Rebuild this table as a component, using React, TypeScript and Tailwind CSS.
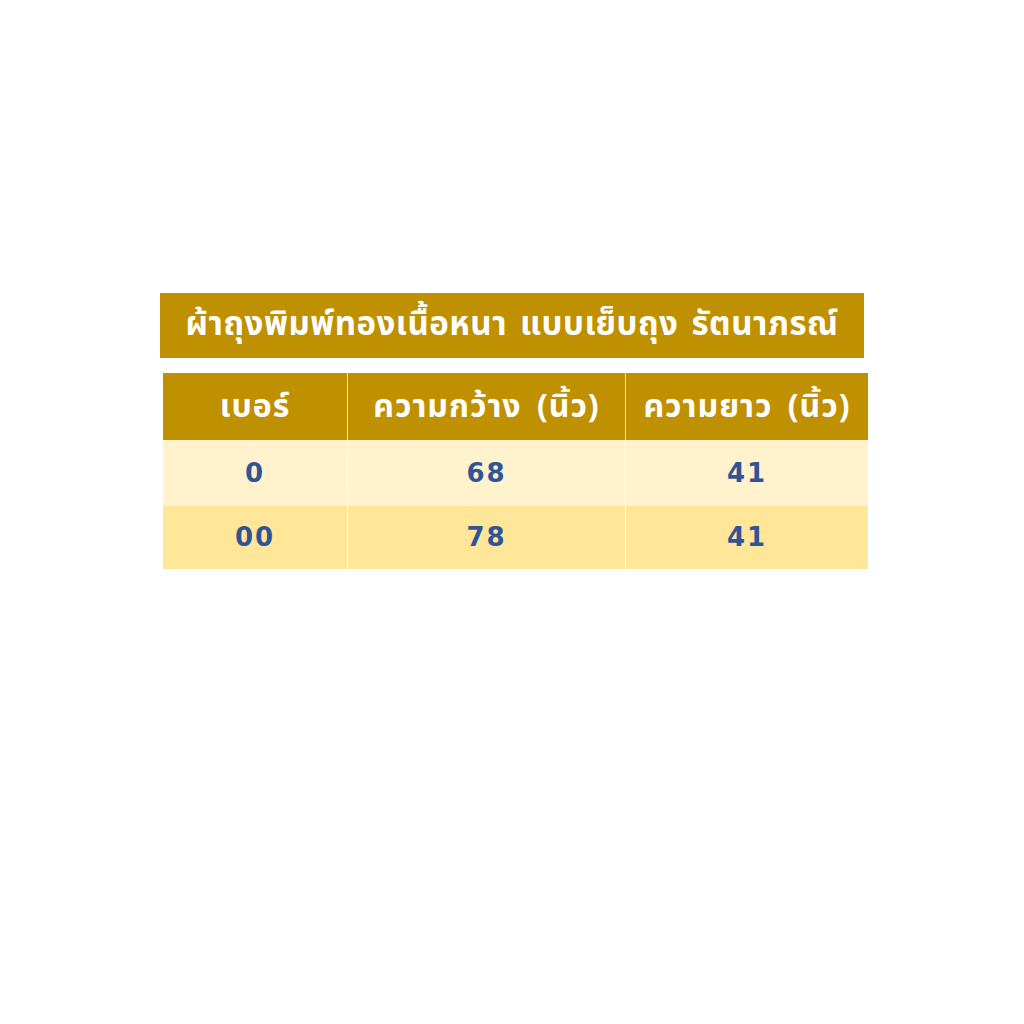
export default function App() {
  const rows = [
    { no: '0', w: '68', l: '41', bg: 'bg-[#fff2cc]', h: 'h-[66px]' },
    { no: '00', w: '78', l: '41', bg: 'bg-[#ffe699]', h: 'h-[63px]' },
  ];
  const thai = { fontFamily: '"Noto Sans Thai", "Noto Sans", "DejaVu Sans", sans-serif' };
  const num = { fontFamily: '"DejaVu Sans", Verdana, sans-serif' };

  return (
    <div className="w-[1024px] h-[1024px] bg-white pt-[293px]">
      <div className="ml-[160px] w-[704px] h-[65px] bg-[#bf9000] flex items-center justify-center">
        <span className="text-white text-[33px] font-bold tracking-[0.5px] [word-spacing:4px]" style={thai}>
          ผ้าถุงพิมพ์ทองเนื้อหนา แบบเย็บถุง รัตนาภรณ์
        </span>
      </div>
      <div className="ml-[163px] mt-[15px] w-[705px]">
        <div className="flex h-[67px] bg-[#bf9000] text-white text-[32px] font-bold tracking-[1px] [word-spacing:6px]" style={thai}>
          <div className="w-[185px] flex items-center justify-center border-r border-[#f5e6b8]">เบอร์</div>
          <div className="w-[278px] flex items-center justify-center border-r border-[#f5e6b8]">ความกว้าง (นิ้ว)</div>
          <div className="flex-1 flex items-center justify-center">ความยาว (นิ้ว)</div>
        </div>
        {rows.map((r) => (
          <div key={r.no} className={`flex ${r.h} ${r.bg} text-[#2f5597] text-[26px] font-bold tracking-[2px]`} style={num}>
            <div className="w-[185px] flex items-center justify-center border-r border-white">{r.no}</div>
            <div className="w-[278px] flex items-center justify-center border-r border-white">{r.w}</div>
            <div className="flex-1 flex items-center justify-center">{r.l}</div>
          </div>
        ))}
      </div>
    </div>
  );
}
